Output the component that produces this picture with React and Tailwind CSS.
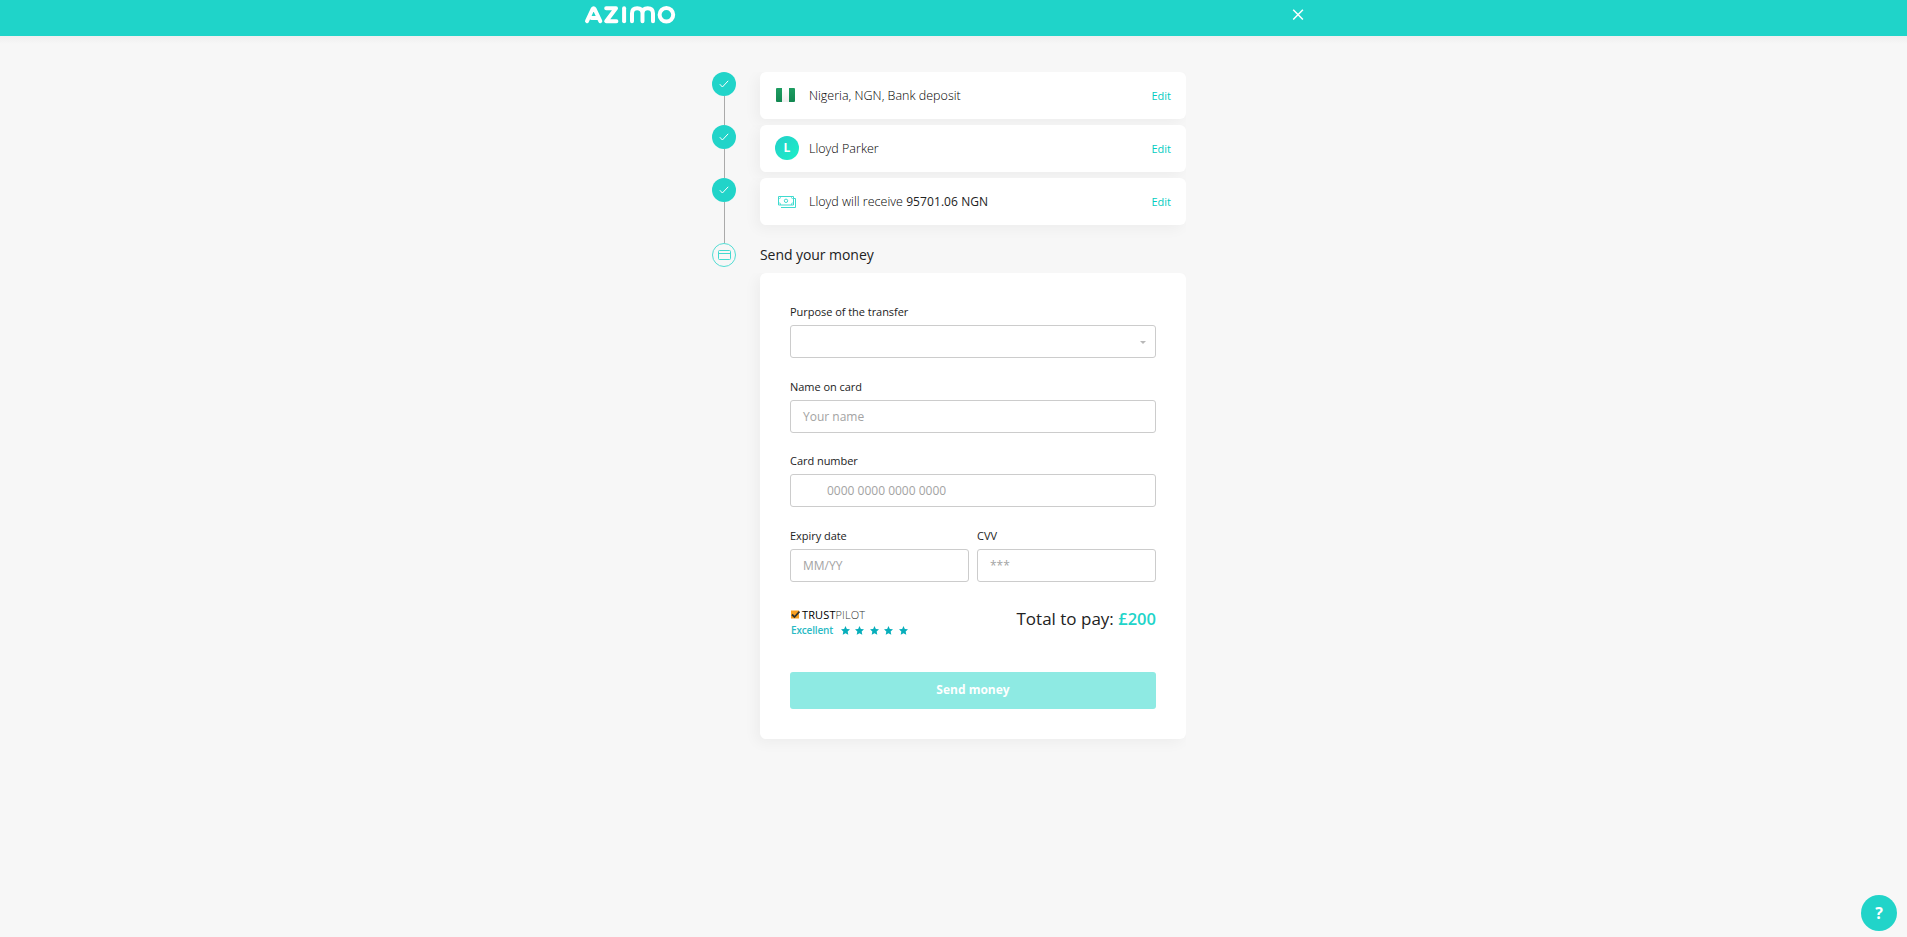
import React from "react";

const Check = () => (
  <svg width="10" height="8" viewBox="0 0 10 8" fill="none" stroke="#fff" strokeWidth="1">
    <path d="M0.8 4.2 3.4 7 9.2 0.8" />
  </svg>
);

const Step = ({ tall }) => (
  <div className={tall ? "flex h-[65px] flex-col items-center" : "flex h-[53px] flex-col items-center"}>
    <div className="flex size-6 shrink-0 items-center justify-center rounded-full bg-[#21d4c9]">
      <Check />
    </div>
    <div className="ml-px w-px flex-1 bg-[#aaaaaa]" />
  </div>
);

const shadow = "shadow-[-4px_4px_14px_rgba(0,0,0,0.045)] [clip-path:inset(0_0_-24px_-24px)]";

const Row = ({ icon, children }) => (
  <div className={"flex h-[47px] items-center rounded-md bg-white pr-[15px] pl-[15px] " + shadow}>
    <div className="flex w-6 shrink-0 items-center">{icon}</div>
    <div className="ml-[10px] flex-1 pt-px text-[12.500px] leading-5 font-light tracking-[0.01px] text-black">{children}</div>
    <div className="pt-px text-[11px] leading-5 text-[#00ccbf]">Edit</div>
  </div>
);

const Field = ({ label, className = "", inner = "pl-3", children }) => (
  <div className={className}>
    <div className="h-[18px] text-[11px] leading-[18px] tracking-[-0.04px] whitespace-nowrap text-[#222]">{label}</div>
    <div
      className={
        "mt-1 flex h-[33px] items-center rounded-[3px] border border-[#cccccc] bg-white text-[12px] text-[#a3a3a3] " + inner
      }
    >
      {children}
    </div>
  </div>
);

const Flag = () => (
  <div className="-mt-[2px] ml-px flex h-[14px] w-[19px] overflow-hidden rounded-[1px]">
    <div className="w-[6px] bg-linear-to-b from-[#1d9c61] to-[#128751]" />
    <div className="w-[7px] bg-linear-to-b from-white to-[#eeeeee]" />
    <div className="w-[6px] bg-linear-to-b from-[#1d9c61] to-[#128751]" />
  </div>
);

const Cash = () => (
  <svg className="mt-px ml-[3px]" width="19" height="13" viewBox="0 0 19 13" fill="none" stroke="#3fdacf">
    <path d="M.5 .5h15v8.500h-15z" />
    <path d="M.5 2.500h1q1 0 1-1V.5M15.500 2.500h-1q-1 0-1-1V.5M.5 7h1q1 0 1 1V9M15.500 7h-1q-1 0-1 1V9" strokeWidth=".8" />
    <circle cx="8" cy="4.800" r="1.700" />
    <path d="M16 2.500h1.500v9H3" />
  </svg>
);

const Logo = () => (
  <svg className="block" width="92" height="18" viewBox="0 0 92 18" fill="none" stroke="#fff" strokeWidth="4" strokeLinecap="round" strokeLinejoin="round">
    <path d="M3 15.200 8.600 3Q9.600 1.300 10.600 3L16.300 15.200M7.500 12h4.500" />
    <path d="M22.200 2.200h9.800L22.200 15.200h10.200" />
    <path d="M40.100 2.200v13" />
    <path d="M48 15.200V7.300Q48 2.200 53.200 2.200T58.500 7.300v7.900M58.500 7.300Q58.500 2.200 63.700 2.200T69 7.300v7.900" />
    <circle cx="82.400" cy="8.800" r="6.800" />
  </svg>
);

const Star = () => (
  <svg className="block" width="9" height="9" viewBox="0 0 10 10" fill="#07aebb">
    <path d="M5 0 6.500 3.200 10 3.700 7.400 6.100 8.100 9.700 5 8 1.900 9.700 2.600 6.100 0 3.700 3.500 3.200z" />
  </svg>
);

export default function App() {
  return (
    <div className="relative h-[937px] w-full overflow-hidden bg-[#f7f7f7] font-['Open_Sans','Noto_Sans',sans-serif]">
      <header className="flex h-9 items-start bg-[#1fd4c9] pl-[584px]">
        <div className="pt-[6px]"><Logo /></div>
        <svg className="mt-[9px] ml-[616px]" width="12" height="12" viewBox="0 0 12 12" stroke="#fff" strokeWidth="1.500">
          <path d="M1.200 .8 10.900 10.500M10.900 .8 1.200 10.500" />
        </svg>
      </header>
      <div className="h-2 bg-linear-to-b from-[#efefef] to-[#f7f7f7]" />

      <main className="mt-7 ml-[712px] flex">
        <aside className="flex w-6 flex-col">
          <Step />
          <Step />
          <Step tall />
          <div className="-ml-[0.5px] flex size-6 items-center justify-center rounded-full border border-[#53ddd4] pl-px">
            <svg width="13" height="10" viewBox="0 0 13 10" fill="none" stroke="#43dad0">
              <rect x=".5" y=".5" width="12" height="9" rx="1" />
              <path d="M.5 3.500h12" />
            </svg>
          </div>
        </aside>

        <section className="ml-6 w-[426px]">
          <div className="flex flex-col gap-[6px]">
            <Row icon={<Flag />}>Nigeria, NGN, Bank deposit</Row>
            <Row
              icon={
                <div className="-mt-[2px] flex size-6 items-center justify-center rounded-full bg-linear-to-br from-[#22cfc9] to-[#1cf0c7] text-[12px] font-bold text-white">
                  L
                </div>
              }
            >
              Lloyd Parker
            </Row>
            <Row icon={<Cash />}>
              Lloyd will receive <span className="text-[12px] font-normal tracking-[0.08px] text-[#222]">95701.06 NGN</span>
            </Row>
          </div>

          <h1 className="mt-[19px] h-[22px] text-[14px] leading-[22px] tracking-[-0.06px] text-[#222]">Send your money</h1>

          <div className={"mt-[7px] h-[466px] rounded-md bg-white px-[30px] pt-[30px] " + shadow}>
            <Field label="Purpose of the transfer" inner="justify-end pt-[2px] pr-[9px]">
              <div className="h-0 w-0 border-x-[3.500px] border-t-[3px] border-x-transparent border-t-[#b8b8b8]" />
            </Field>
            <Field label="Name on card" className="mt-5">Your name</Field>
            <Field label="Card number" className="mt-[19px]" inner="pl-9">0000 0000 0000 0000</Field>
            <div className="mt-5 flex gap-2">
              <Field label="Expiry date" className="w-[179px]">MM/YY</Field>
              <Field label="CVV" className="w-[179px]">***</Field>
            </div>

            <div className="mt-6 flex h-[66px] justify-between">
              <div className="pt-[1px] pl-[1px]">
                <div className="flex h-[15px] items-center text-[11px] leading-[15px]">
                  <svg className="mr-[2px] shrink-0" width="9" height="9" viewBox="0 0 9 9">
                    <rect y=".5" width="8" height="8" fill="#f9a01f" />
                    <path d="M1 4.500 3.500 7 8.500 1.500" fill="none" stroke="#30302a" strokeWidth="1.800" />
                  </svg>
                  <span className="tracking-[0.12px] text-black">TRUST</span>
                  <span className="font-light tracking-[0.12px] text-[#333]">PILOT</span>
                </div>
                <div className="flex h-4 items-center">
                  <span className="w-[49.500px] text-[10px] font-semibold tracking-[-0.15px] text-[#29bac4]">Excellent</span>
                  <div className="flex gap-[5.500px]">
                    <Star /><Star /><Star /><Star /><Star />
                  </div>
                </div>
              </div>
              <div className="pt-px text-[17px] leading-6 font-medium text-[#222]">
                Total to pay: <span className="text-[16.500px] font-semibold text-[#21d4c9]">£200</span>
              </div>
            </div>

            <button className="flex h-[37px] w-full items-center justify-center rounded-[3px] bg-[#8eeae3] pb-[1px] text-[12px] font-bold text-white">
              Send money
            </button>
          </div>
        </section>
      </main>

      <button className="absolute top-[895px] left-[1861px] flex size-9 items-center justify-center rounded-full bg-[#21d4c9] text-[16px] font-bold text-white">
        ?
      </button>
    </div>
  );
}
